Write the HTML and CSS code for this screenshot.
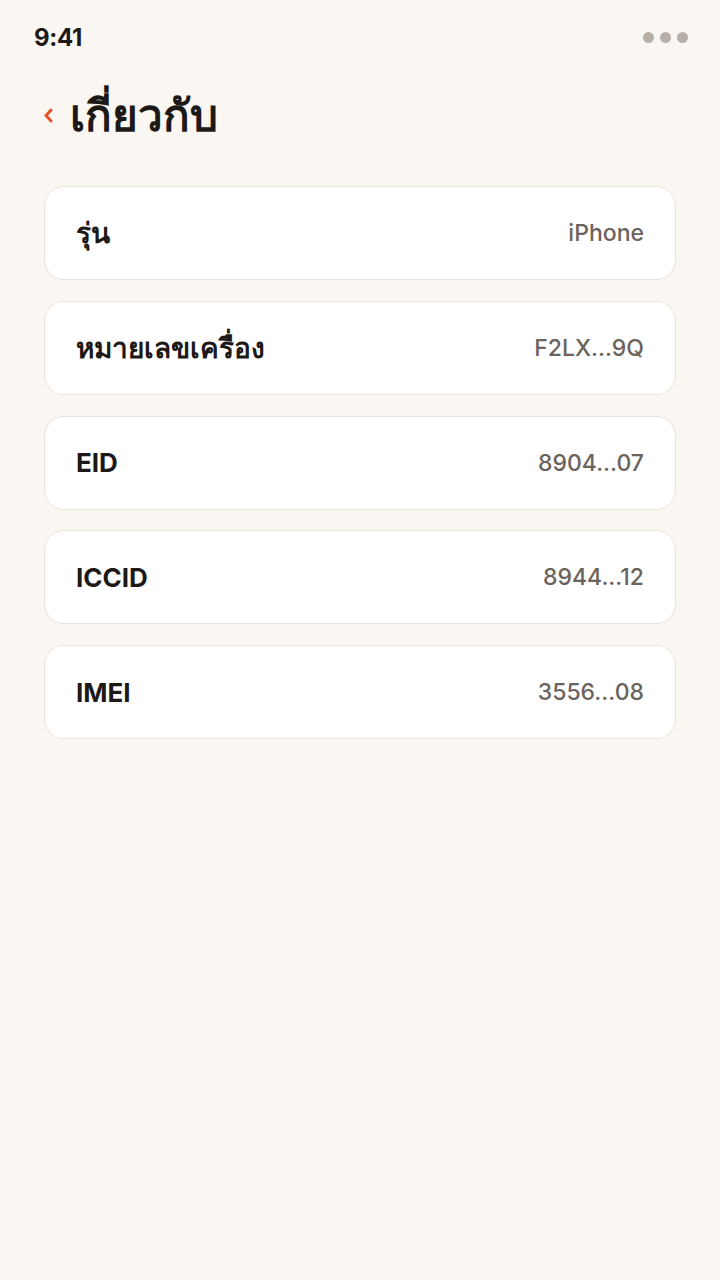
FILE: index.html
```html
<!DOCTYPE html>
<html lang="th">
	<head>
		<meta charset="UTF-8">
		<meta name="viewport" content="width=device-width, initial-scale=1">
		<title>เกี่ยวกับ</title>
		<link rel="stylesheet" href="styles.css">
	</head>
	<body>
		<div class="status">
			<span class="time">9:41</span>
			<span class="dots"><i></i><i></i><i></i></span>
		</div>
		<div class="head">
			<svg class="back" width="12" height="16" viewBox="0 0 12 16"><path d="M7 3 L2 8.5 L7 14" fill="none" stroke="#e8512a" stroke-width="3" stroke-linecap="round" stroke-linejoin="round"/></svg>
			<h1>เกี่ยวกับ</h1>
		</div>
		<ul class="list">
			<li class="row"><span class="label th">รุ่น</span><span class="value">iPhone</span></li>
			<li class="row"><span class="label th">หมายเลขเครื่อง</span><span class="value">F2LX...9Q</span></li>
			<li class="row"><span class="label">EID</span><span class="value">8904...07</span></li>
			<li class="row"><span class="label">ICCID</span><span class="value">8944...12</span></li>
			<li class="row"><span class="label">IMEI</span><span class="value">3556...08</span></li>
		</ul>
	</body>
</html>
```

FILE: styles.css
```css
body{
margin: 0;
background: #faf7f2;
font-family: Inter, "Noto Sans", "DejaVu Sans", sans-serif;
color: #1c1917;
}
.status{
height: 74px;
padding: 0 32px 0 34px;
display: flex;
align-items: center;
justify-content: space-between;
}
.time{
font-size: 24px;
font-weight: 700;
letter-spacing: -0.3px;
}
.dots{
display: flex;
gap: 6px;
}
.dots i{
width: 11px;
height: 11px;
border-radius: 50%;
background: #b7b0a9;
}
.head{
display: flex;
align-items: center;
padding: 0 44px;
height: 82px;
}
.back{
margin-right: 14px;
}
h1{
margin: 0;
font-size: 44px;
font-weight: 700;
}
.list{
margin: 30px 44px 0;
padding: 0;
list-style: none;
display: flex;
flex-direction: column;
gap: 20.75px;
}
.row{
height: 94px;
box-sizing: border-box;
border: 1px solid #ebe3da;
border-radius: 20px;
background: #fff;
padding: 0 31px;
display: flex;
align-items: center;
justify-content: space-between;
}
.label{
font-size: 26px;
font-weight: 700;
}
.label.th{
font-size: 28px;
}
.value{
font-size: 23px;
font-weight: 500;
color: #6b635c;
}
```
